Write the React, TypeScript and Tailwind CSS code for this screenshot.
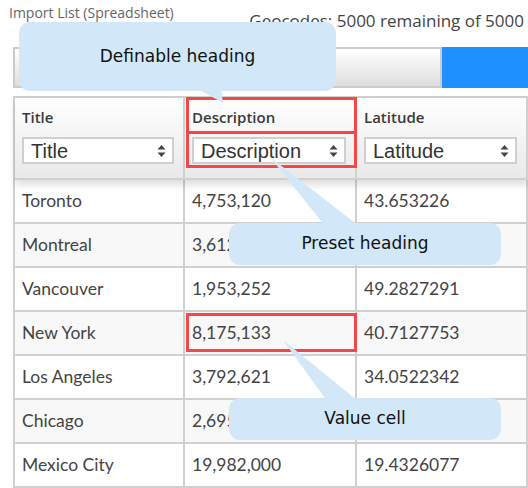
const rows = [
  ["Toronto", "4,753,120", "43.653226"],
  ["Montreal", "3,612,000", "45.5016889"],
  ["Vancouver", "1,953,252", "49.2827291"],
  ["New York", "8,175,133", "40.7127753"],
  ["Los Angeles", "3,792,621", "34.0522342"],
  ["Chicago", "2,695,598", "41.8781136"],
  ["Mexico City", "19,982,000", "19.4326077"],
];

const headings = ["Title", "Description", "Latitude"];

function SortArrows() {
  return (
    <svg width="9" height="14" viewBox="0 0 9 14" aria-hidden="true">
      <path d="M4.5 1 L8.5 5.5 L0.5 5.5 Z" fill="#444" />
      <path d="M4.5 13 L8.5 8.5 L0.5 8.5 Z" fill="#444" />
    </svg>
  );
}

function HeaderCell({ label }: { label: string }) {
  return (
    <div className="flex h-[82px] flex-col border-r-2 border-b-2 border-[#d0d0d0] bg-gradient-to-b from-white to-[#e9e9e9] pl-[7px] pr-[9px]">
      <div className="pt-[8px] font-['Open_Sans',sans-serif] text-[15px] font-semibold leading-[22px] text-[#3a3a3a]">
        {label}
      </div>
      <div className="mt-[9px] flex h-[27px] items-center justify-between border-2 border-[#cfcfcf] bg-white pl-[7px] pr-[6px] font-['Liberation_Sans',Arial,sans-serif] text-[20px] text-[#333]">
        <span className="leading-none">{label}</span>
        <SortArrows />
      </div>
    </div>
  );
}

function Callout({ className, text }: { className: string; text: string }) {
  return (
    <div
      className={`absolute flex items-center justify-center rounded-[11px] bg-[#d2e8f8] font-['DejaVu_Sans',Verdana,sans-serif] text-[17px] text-[#111] ${className}`}
    >
      {text}
    </div>
  );
}

export default function App() {
  return (
    <div className="relative h-[488px] w-[528px] overflow-hidden bg-white">
      <div className="flex h-[47px] items-start justify-between">
        <div className="pl-[9px] pt-[3px] font-['Open_Sans',sans-serif] text-[14px] leading-[20px] text-[#666]">
          Import List (Spreadsheet)
        </div>
        <div className="pr-[4px] pt-[9px] font-['Open_Sans',sans-serif] text-[17px] leading-[24px] text-[#444]">
          Geocodes: 5000 remaining of 5000
        </div>
      </div>

      <div className="flex h-[41px] pl-[13px]">
        <div className="w-[429px] border-2 border-[#cccccc] bg-gradient-to-b from-white to-[#dedede]" />
        <div className="flex-1 bg-[#1e90ff]" />
      </div>

      <div className="ml-[13px] mt-[8px] border-l-2 border-t-2 border-[#d0d0d0]">
        <div className="relative z-10 grid grid-cols-[170px_172px_1fr] shadow-[0_5px_7px_rgba(0,0,0,0.13)]">
          {headings.map((h) => (
            <HeaderCell key={h} label={h} />
          ))}
        </div>
        {rows.map((r, i) => (
          <div
            key={r[0]}
            className={`grid grid-cols-[170px_172px_1fr] font-['Lato',sans-serif] text-[17.5px] text-[#444] ${
              i % 2 === 1 ? "bg-[#f8f8f8]" : "bg-white"
            }`}
          >
            {r.map((c, j) => (
              <div
                key={j}
                className="flex h-[44px] items-center border-r-2 border-b-2 border-[#d0d0d0] pl-[7px] pt-[1px]"
              >
                {c}
              </div>
            ))}
          </div>
        ))}
      </div>

      {/* highlight boxes */}
      <div className="absolute left-[186px] top-[97px] z-20 h-[37px] w-[171px] border-[3px] border-[#f44848]" />
      <div className="absolute left-[186px] top-[131px] z-20 h-[37px] w-[171px] border-[3px] border-[#f44848]" />
      <div className="absolute left-[186px] top-[313px] z-20 h-[39px] w-[171px] border-[3px] border-[#f44848]" />

      {/* callout tails */}
      <svg className="absolute left-0 top-0 z-30" width="528" height="488" aria-hidden="true">
        <polygon points="196,88 221,88 223,103" fill="#d2e8f8" />
        <polygon points="270,157 325,226 359,226" fill="#d2e8f8" />
        <polygon points="283,340 327,401 358,401" fill="#d2e8f8" />
      </svg>

      <Callout className="left-[19px] top-[22px] z-30 h-[69px] w-[317px]" text="Definable heading" />
      <Callout className="left-[229px] top-[223px] z-30 h-[42px] w-[272px]" text="Preset heading" />
      <Callout className="left-[229px] top-[398px] z-30 h-[42px] w-[272px]" text="Value cell" />
    </div>
  );
}
